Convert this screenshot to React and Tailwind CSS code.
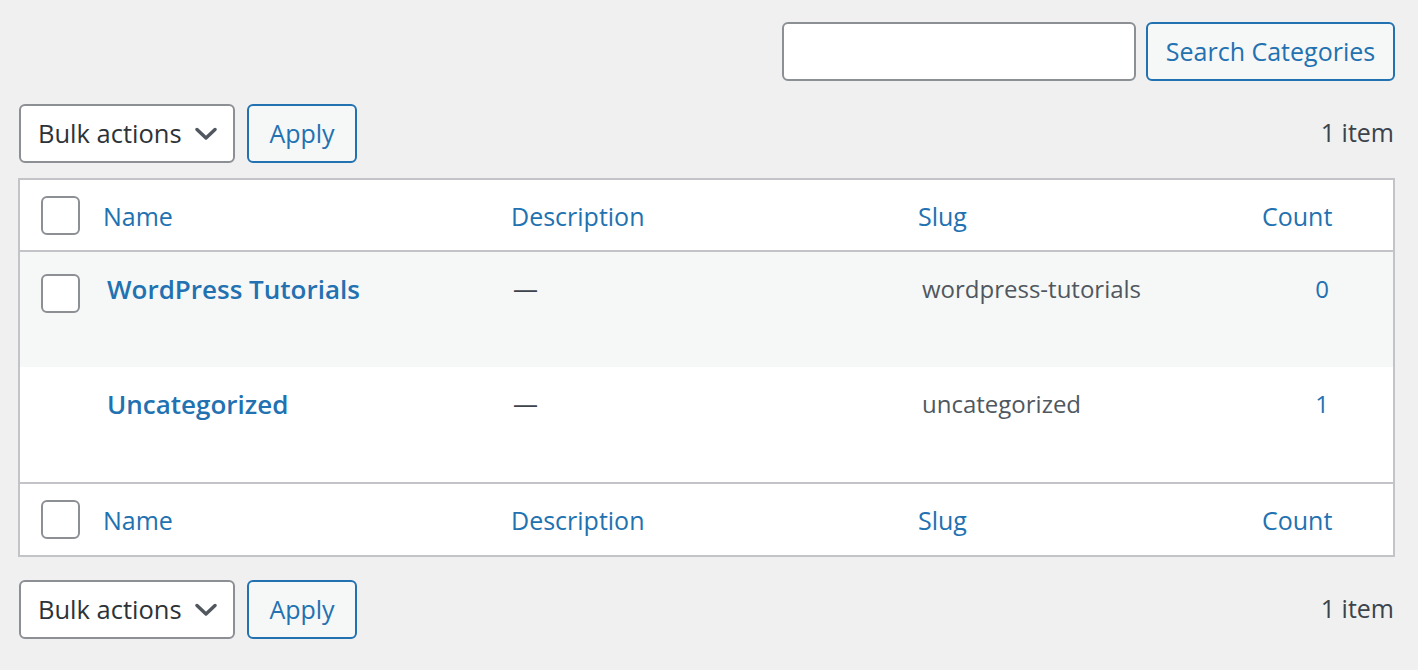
import React from 'react';

const font = { fontFamily: '"Open Sans", "Noto Sans", sans-serif' };
const cols = 'grid grid-cols-[72px_408px_407px_344px_1fr]';

const Checkbox = () => (
  <span className="block w-[39px] h-[39px] rounded-[6px] border-2 border-[#8c8f94] bg-white" />
);

const Chevron = () => (
  <svg width="22" height="14" viewBox="0 0 22 14" className="text-[#50575e]">
    <path d="M2 2.5 L11 11 L20 2.5" fill="none" stroke="currentColor" strokeWidth="3.4" strokeLinecap="round" strokeLinejoin="round" />
  </svg>
);

const BulkBar = () => (
  <div className="flex items-center justify-between">
    <div className="flex items-center gap-[12px]">
      <div className="flex items-center justify-between w-[216px] h-[59px] pl-[17px] pr-[16px] bg-white border-2 border-[#8c8f94] rounded-[6px] text-[#2c3338] text-[25.5px]">
        <span>Bulk actions</span>
        <Chevron />
      </div>
      <button className="h-[59px] w-[110px] border-2 border-[#2271b1] rounded-[6px] bg-[#f6f7f7] text-[#2271b1] text-[25px]">
        Apply
      </button>
    </div>
    <span className="text-[25px] text-[#3c434a] pr-[1px] -mt-[2px]">1 item</span>
  </div>
);

const HeadRow = ({ footer }) => (
  <div className={`${cols} items-center text-[25px] text-[#2271b1] ${footer ? 'h-[73px] border-t-2 border-[#c3c4c7]' : 'h-[72px] border-b-2 border-[#c3c4c7]'}`}>
    <div className="pl-[21px]"><Checkbox /></div>
    <div className="pl-[11px] pt-[3px]">Name</div>
    <div className="pl-[11px] pt-[3px]">Description</div>
    <div className="pl-[11px] pt-[3px]">Slug</div>
    <div className="pl-[11px] pt-[3px]">Count</div>
  </div>
);

const rows = [
  { name: 'WordPress Tutorials', slug: 'wordpress-tutorials', count: '0', check: true, bg: 'bg-[#f6f7f7]' },
  { name: 'Uncategorized', slug: 'uncategorized', count: '1', check: false, bg: 'bg-white' },
];

export default function App() {
  return (
    <div className="min-h-screen bg-[#f0f0f1] px-[19px] pt-[22px] pb-[30px] text-[#3c434a]" style={font}>
      {/* Search */}
      <div className="flex justify-end gap-[10px] pr-[4px]">
        <div className="w-[354px] h-[59px] bg-white border-2 border-[#8c8f94] rounded-[6px]" />
        <button className="h-[59px] w-[249px] border-2 border-[#2271b1] rounded-[6px] bg-[#f6f7f7] text-[#2271b1] text-[25px]">
          Search Categories
        </button>
      </div>

      <div className="mt-[23px] pr-[4px]">
        <BulkBar />
      </div>

      {/* Table */}
      <div className="mt-[15px] mr-[4px] -ml-[1px] bg-white border-2 border-[#c3c4c7]">
        <HeadRow />
        {rows.map((r) => (
          <div key={r.name} className={`${cols} h-[115px] ${r.bg}`}>
            <div className="pl-[21px] pt-[22px]">{r.check && <Checkbox />}</div>
            <div className="pl-[15px] pt-[18px] text-[26px] font-semibold text-[#2271b1]">{r.name}</div>
            <div className="pl-[13px] pt-[18px] text-[25px]">—</div>
            <div className="pl-[15px] pt-[19px] text-[24px] text-[#50575e]">{r.slug}</div>
            <div className="pt-[19px] text-[24px] text-[#2271b1] text-center">{r.count}</div>
          </div>
        ))}
        <HeadRow footer />
      </div>

      <div className="mt-[23px] pr-[4px]">
        <BulkBar />
      </div>
    </div>
  );
}
